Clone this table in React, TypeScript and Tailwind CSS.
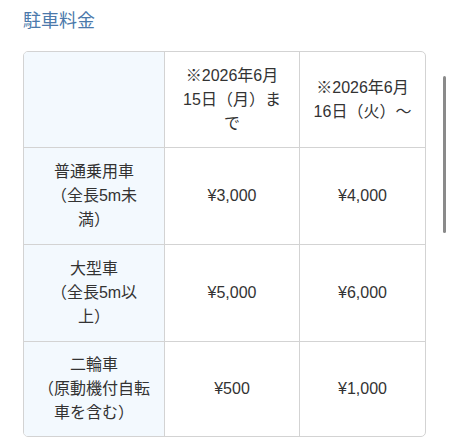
const rows = [
  { label: ["普通乗用車", "（全長5m未", "満）"], before: "¥3,000", after: "¥4,000" },
  { label: ["大型車", "（全長5m以", "上）"], before: "¥5,000", after: "¥6,000" },
  { label: ["二輪車", "（原動機付自転", "車を含む）"], before: "¥500", after: "¥1,000" },
];

function Lines({ lines }: { lines: string[] }) {
  return (
    <>
      {lines.map((line) => (
        <span key={line} className="block">
          {line}
        </span>
      ))}
    </>
  );
}

export default function App() {
  return (
    <div
      className="relative h-[437px] w-[450px] overflow-hidden bg-white pl-[23px] pt-[8px] text-[#333]"
      style={{ fontFamily: '"Liberation Sans", "Noto Sans CJK JP", sans-serif' }}
    >
      <h2 className="text-[18px] leading-[27px] text-[#4b79ab]">駐車料金</h2>

      <div className="mt-[16px] w-[403px] overflow-hidden rounded-[5px] border border-[#d3d3d3] text-[16px] leading-[24px]">
        <div className="grid grid-cols-[141px_135px_125px]">
          <div className="h-[96px] border-b border-r border-[#d3d3d3] bg-[#f3f9fe]" />
          <div className="flex h-[96px] items-center justify-center border-b border-r border-[#d3d3d3] text-center">
            <div>
              <Lines lines={["※2026年6月", "15日（月）ま", "で"]} />
            </div>
          </div>
          <div className="flex h-[96px] items-center justify-center border-b border-[#d3d3d3] text-center">
            <div>
              <Lines lines={["※2026年6月", "16日（火）～"]} />
            </div>
          </div>

          {rows.map((row, i) => {
            const last = i === rows.length - 1;
            const h = last ? "h-[94px]" : "h-[97px]";
            const b = last ? "" : "border-b";
            return (
              <div key={row.before} className="contents">
                <div
                  className={`flex ${h} items-center justify-center ${b} border-r border-[#d3d3d3] bg-[#f3f9fe] text-center`}
                >
                  <div>
                    <Lines lines={row.label} />
                  </div>
                </div>
                <div
                  className={`flex ${h} items-center justify-center ${b} border-r border-[#d3d3d3]`}
                >
                  {row.before}
                </div>
                <div className={`flex ${h} items-center justify-center ${b} border-[#d3d3d3]`}>
                  {row.after}
                </div>
              </div>
            );
          })}
        </div>
      </div>

      {/* scroll indicator */}
      <div className="absolute left-[443px] top-[76px] h-[157px] w-[3px] rounded-full bg-[#8a8a8a]" />
    </div>
  );
}
